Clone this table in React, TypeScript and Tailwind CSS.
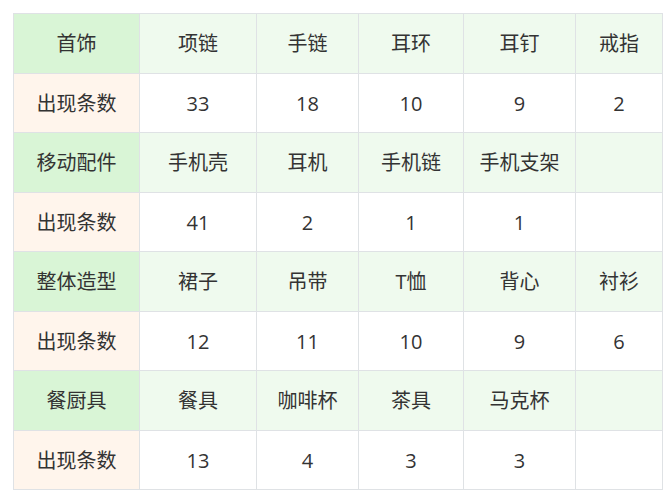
const sections: { head: string; items: string[]; counts: string[] }[] = [
  { head: '首饰', items: ['项链', '手链', '耳环', '耳钉', '戒指'], counts: ['33', '18', '10', '9', '2'] },
  { head: '移动配件', items: ['手机壳', '耳机', '手机链', '手机支架', ''], counts: ['41', '2', '1', '1', ''] },
  { head: '整体造型', items: ['裙子', '吊带', 'T恤', '背心', '衬衫'], counts: ['12', '11', '10', '9', '6'] },
  { head: '餐厨具', items: ['餐具', '咖啡杯', '茶具', '马克杯', ''], counts: ['13', '4', '3', '3', ''] },
];

const widths = [126, 117, 102, 105, 112, 87];

const cell = 'border border-[#dfe2e5] text-center align-middle px-0 pt-[2px] pb-0';

export default function App() {
  return (
    <div
      className="w-[669px] h-[496px] bg-white pl-[13px] pt-[13px] text-[#333] text-[20px]"
      style={{ fontFamily: '"Open Sans", "Noto Sans CJK SC", sans-serif' }}
    >
      <table className="border-collapse table-fixed w-[649px]">
        <colgroup>
          {widths.map((w, i) => (
            <col key={i} style={{ width: w }} />
          ))}
        </colgroup>
        <tbody>
          {sections.map(s => [
            <tr key={s.head} className="h-[59.5px]">
              <td className={`${cell} bg-[#d9f5d6]`}>{s.head}</td>
              {s.items.map((it, i) => (
                <td key={i} className={`${cell} bg-[#effaee]`}>{it}</td>
              ))}
            </tr>,
            <tr key={s.head + '-n'} className="h-[59.5px]">
              <td className={`${cell} bg-[#fff5ec]`}>出现条数</td>
              {s.counts.map((c, i) => (
                <td key={i} className={`${cell} bg-white`}>{c}</td>
              ))}
            </tr>,
          ])}
        </tbody>
      </table>
    </div>
  );
}
